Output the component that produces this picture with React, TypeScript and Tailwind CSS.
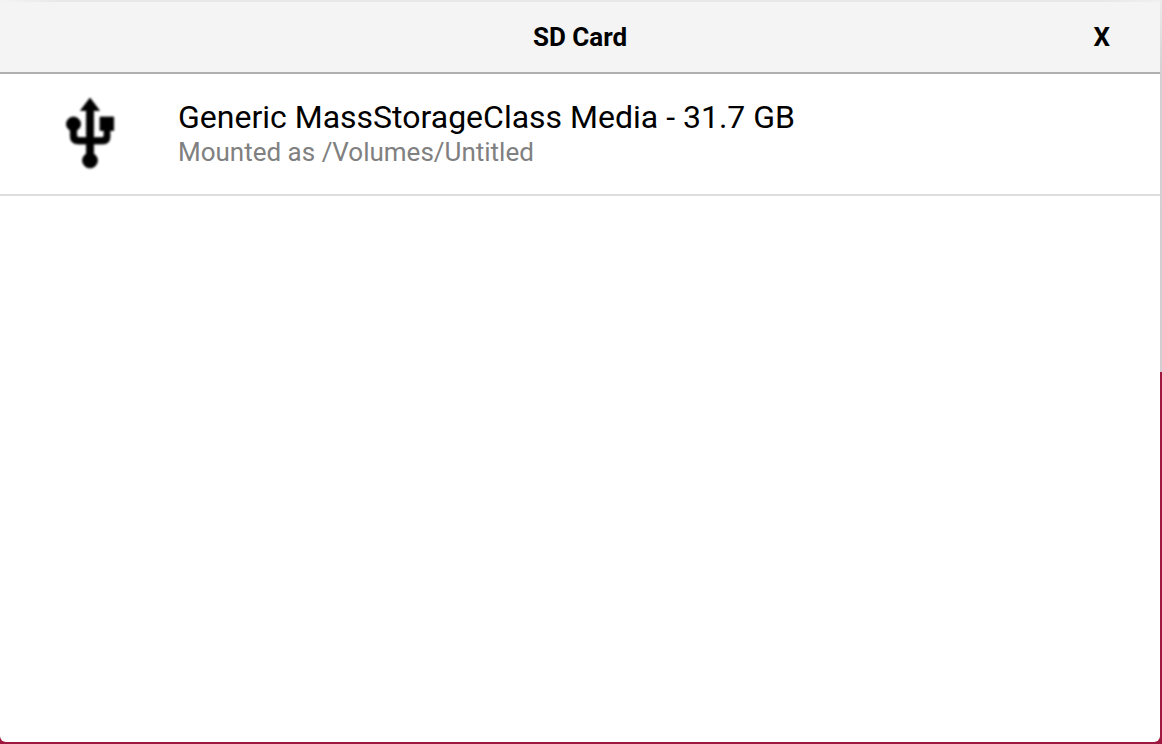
export default function App() {
  return (
    <div className="flex min-h-screen flex-col bg-[linear-gradient(to_bottom,#ececec_0%,#d2d0d2_10%,#d0ced0_50%,#9e173f_50%,#9e173f_100%)] pr-[2px] pb-[2px] font-[Roboto,sans-serif] text-black">
      <div className="h-[2px] bg-[linear-gradient(to_right,#f4f4f4_0%,#e8e8e8_5%,#e8e8e8_95%,#f0f0f0_100%)]" />
      <main className="flex grow flex-col overflow-hidden rounded-b-md bg-white">
        <header className="grid h-[72px] grid-cols-[1fr_auto_1fr] items-center border-b-2 border-[#b0b0b0] bg-[#f4f4f4] text-[26px] font-bold">
          <h1 className="col-start-2">SD Card</h1>
          <button type="button" aria-label="Close" className="mr-[50px] justify-self-end">X</button>
        </header>
        <ul>
          <li className="border-b-2 border-[#dddddd]">
            <button type="button" className="flex h-[120px] w-full items-center pb-[2px] text-left">
              <svg viewBox="0 0 48 72" className="ml-[66px] h-[72px] w-12 shrink-0 overflow-visible" aria-hidden="true">
                <filter id="soften" x="-10%" y="-10%" width="120%" height="120%">
                  <feGaussianBlur stdDeviation="0.8" />
                </filter>
                <g filter="url(#soften)" stroke="black" strokeWidth="0.8">
                  <path d="M24 1 33.5 13.5H27.6V40.5H36Q38 40.5 38 38.5V33.5H34V20H47.7V33.5H44V40Q44 47 37 47H27.6V58H20.4V47H12Q4.3 47 4.3 39V30H10.7V38Q10.7 40.5 13 40.5H20.4V13.5H14.5Z" />
                  <circle cx="7.5" cy="27" r="7.1" />
                  <circle cx="24" cy="63.5" r="7.5" />
                </g>
              </svg>
              <span className="ml-16 flex flex-col">
                <span className="text-[32px] leading-[38px]">Generic MassStorageClass Media - 31.7 GB</span>
                <span className="text-[26px] leading-8 text-[#808080]">Mounted as /Volumes/Untitled</span>
              </span>
            </button>
          </li>
        </ul>
      </main>
    </div>
  );
}
